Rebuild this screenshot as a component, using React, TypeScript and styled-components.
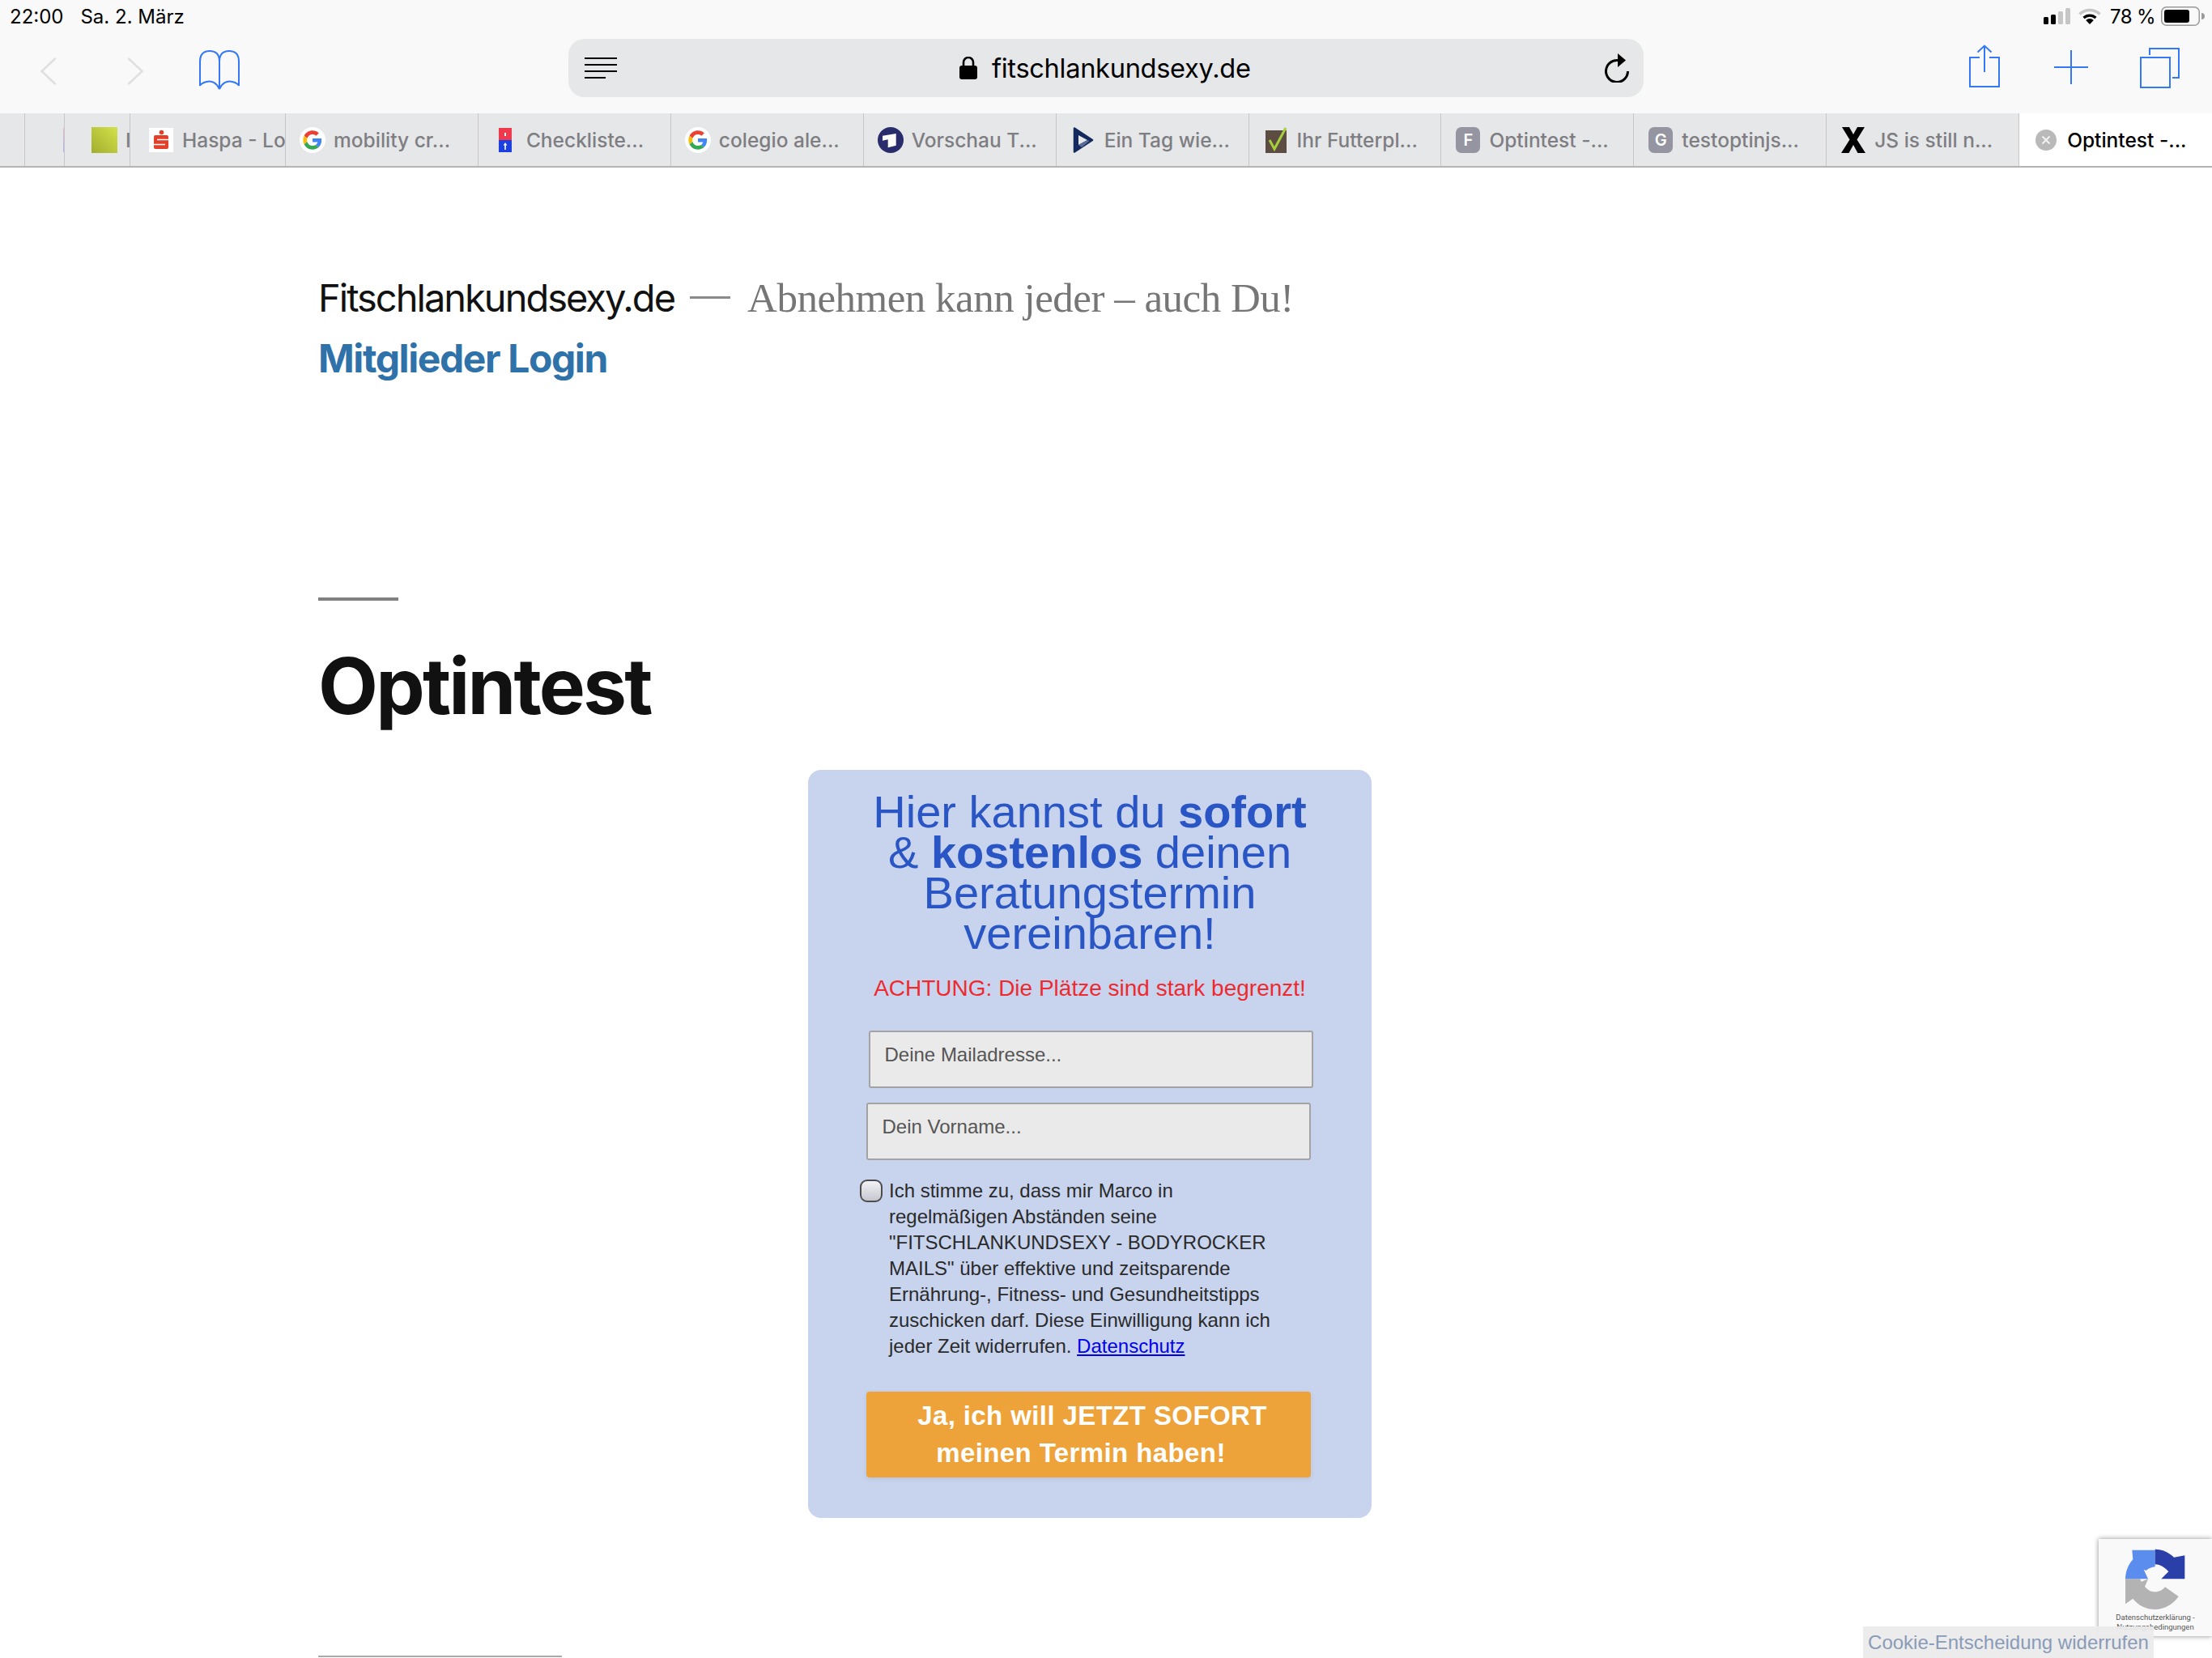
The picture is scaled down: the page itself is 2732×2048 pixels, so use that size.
import React from 'react';
import styled, { createGlobalStyle } from 'styled-components';

const GlobalStyle = createGlobalStyle`
  html, body {
    margin: 0;
    padding: 0;
    background: #fff;
  }
  * {
    box-sizing: border-box;
  }
`;

const BLUE = '#3478f6';
const CHROME = '"Inter", "Liberation Sans", sans-serif';
const HELVETICA = '"Liberation Sans", Arial, sans-serif';

const Page = styled.div`
  width: 2732px;
  height: 2048px;
  position: relative;
  overflow: hidden;
  background: #fff;
`;

const BrowserBar = styled.header`
  background: #f9f9f9;
`;

const StatusBar = styled.div`
  height: 40px;
  padding: 0 9px 0 12px;
  display: flex;
  align-items: center;
  justify-content: space-between;
  font-family: ${CHROME};
  font-size: 24px;
  color: #000;
`;

const StatusGroup = styled.div`
  display: flex;
  align-items: center;
`;

const BatteryLevel = styled.span`
  margin-left: 11px;
  letter-spacing: -0.6px;
`;

const Toolbar = styled.div`
  height: 100px;
  display: grid;
  grid-template-columns: 702px 1328px 1fr;
  align-items: start;
`;

const NavGroup = styled.div`
  display: flex;
  align-items: flex-start;
  padding-left: 50px;
`;

const ActionGroup = styled.div`
  display: flex;
  align-items: flex-start;
  padding-left: 402px;
`;

const IconSlot = styled.span<{ $left?: number; $top?: number }>`
  display: flex;
  margin-left: ${(p) => p.$left ?? 0}px;
  margin-top: ${(p) => p.$top ?? 0}px;
`;

const UrlBar = styled.div`
  height: 72px;
  margin-top: 8px;
  border-radius: 20px;
  background: #e6e7e9;
  display: grid;
  grid-template-columns: 463px auto 1fr auto;
  align-items: center;
  padding-left: 20px;
  padding-right: 18px;
`;

const UrlCenter = styled.div`
  display: flex;
  align-items: center;
  gap: 18px;
  font-family: ${CHROME};
  font-size: 32.6px;
  letter-spacing: -0.3px;
  color: #000;
`;

const TabStrip = styled.div`
  height: 67px;
  display: flex;
  background: #e6e7e9;
  border-bottom: 2px solid #b4b4b4;
`;

const Tab = styled.div<{ $width?: number; $active?: boolean; $pad?: number }>`
  ${(p) => (p.$width ? `flex: none; width: ${p.$width}px;` : 'flex: 1 1 0;')}
  min-width: 0;
  display: flex;
  align-items: center;
  justify-content: ${(p) => (p.$pad === 0 ? 'flex-end' : 'flex-start')};
  overflow: hidden;
  padding-left: ${(p) => p.$pad ?? 17}px;
  border-right: 1px solid ${(p) => (p.$active ? 'transparent' : '#c6c6c8')};
  background: ${(p) => (p.$active ? '#fff' : 'transparent')};
`;

const TabSliver = styled.span`
  width: 1px;
  height: 30px;
  background: linear-gradient(#f0b9c4, #a9b4ee);
`;

const FaviconBox = styled.span`
  width: 32px;
  height: 32px;
  flex: none;
  display: flex;
  align-items: center;
  justify-content: center;
`;

const TabTitle = styled.span<{ $active?: boolean }>`
  margin-left: 10px;
  font-family: ${CHROME};
  font-size: 24.5px;
  font-weight: 500;
  white-space: nowrap;
  color: ${(p) => (p.$active ? '#000' : '#7e7e82')};
`;

const LetterTile = styled.span`
  width: 30px;
  height: 32px;
  border-radius: 7px;
  background: #9595a1;
  color: #fff;
  font-family: ${CHROME};
  font-size: 20px;
  font-weight: 600;
  display: flex;
  align-items: center;
  justify-content: center;
`;

const Main = styled.main`
  padding: 123px 0 0 393px;
`;

const SiteLine = styled.div`
  height: 75px;
  display: flex;
  align-items: center;
  white-space: nowrap;
`;

const SiteTitle = styled.span`
  font-family: ${CHROME};
  font-size: 47px;
  letter-spacing: -2px;
  color: #111;
`;

const Dash = styled.span`
  width: 50px;
  height: 3px;
  background: #8a8a8a;
  margin: 0 21px 0 19px;
`;

const Tagline = styled.span`
  font-family: "Liberation Serif", "Times New Roman", serif;
  font-size: 51px;
  letter-spacing: -0.5px;
  color: #767676;
`;

const MemberLink = styled.a`
  font-family: ${CHROME};
  font-size: 48px;
  font-weight: 700;
  letter-spacing: -1.4px;
  color: #2f72a9;
  text-decoration: none;
`;

const Rule = styled.hr`
  width: 99px;
  height: 4px;
  border: 0;
  margin: 258px 0 0;
  background: #808080;
`;

const PageTitle = styled.h1`
  margin: 44px 0 0;
  height: 122px;
  display: flex;
  align-items: center;
  font-family: ${CHROME};
  font-size: 96px;
  font-weight: 700;
  letter-spacing: -2.8px;
  line-height: 1;
  color: #111;
`;

const OptinCard = styled.form`
  width: 696px;
  height: 924px;
  margin: 43px 0 0 605px;
  padding-top: 27px;
  border-radius: 16px;
  background: #c8d4ee;
  font-family: ${HELVETICA};
  display: flex;
  flex-direction: column;
`;

const CardHeading = styled.h2`
  width: 560px;
  margin: 0 auto;
  text-align: center;
  font-size: 56px;
  font-weight: 400;
  line-height: 50px;
  color: #2a55c4;
  strong {
    font-weight: 700;
  }
`;

const Warning = styled.p`
  margin: 23px 0 0;
  text-align: center;
  font-size: 28px;
  line-height: 40px;
  color: #ee2a2e;
`;

const TextField = styled.input<{ $left: number; $top: number }>`
  display: block;
  width: 549px;
  height: 71px;
  margin: ${(p) => p.$top}px 0 0 ${(p) => p.$left}px;
  padding: 0 17.5px 12px;
  background: #eaeaea;
  border: 2px solid #a3a3a3;
  border-radius: 3px;
  font-family: ${HELVETICA};
  font-size: 24px;
  &::placeholder {
    color: #555;
    opacity: 1;
  }
`;

const ConsentRow = styled.label`
  display: flex;
  align-items: flex-start;
  margin: 24px 0 0 64px;
  font-size: 24px;
  line-height: 32px;
  color: #2a2a2a;
`;

const ConsentBox = styled.input`
  appearance: none;
  flex: none;
  width: 28px;
  height: 28px;
  margin: 0 8px 0 0;
  border: 2px solid #4d4d4d;
  border-radius: 9px;
  background: linear-gradient(#f2f2f7, #c6c7cf);
`;

const ConsentText = styled.span`
  width: 540px;
  margin-top: -2px;
`;

const PrivacyLink = styled.a`
  color: #0000ee;
  text-decoration: underline;
`;

const SubmitButton = styled.button`
  width: 549px;
  height: 106px;
  margin: 40px 0 0 72px;
  padding: 0;
  border: 0;
  border-radius: 4px;
  background: #eea33a;
  box-shadow: 0 2px 6px rgba(0, 0, 0, 0.08);
  color: #fff;
  font-family: ${HELVETICA};
  font-size: 33px;
  font-weight: 700;
  line-height: 46px;
  letter-spacing: 0.4px;
`;

const ButtonLine = styled.span<{ $before?: number; $after?: number }>`
  display: block;
  padding-left: ${(p) => p.$before ?? 0}px;
  padding-right: ${(p) => p.$after ?? 0}px;
`;

const FooterRule = styled.hr`
  width: 301px;
  height: 2px;
  border: 0;
  margin: 170px 0 0;
  background: #aaa;
`;

const RecaptchaBadge = styled.aside`
  position: absolute;
  right: 0;
  top: 1901px;
  width: 140px;
  height: 120px;
  padding-top: 12px;
  background: #f9f9f9;
  box-shadow: 0 0 6px rgba(0, 0, 0, 0.45);
  display: flex;
  flex-direction: column;
  align-items: center;
  font-family: "Roboto", ${HELVETICA};
  font-size: 9.5px;
  line-height: 12px;
  color: #555;
`;

const BadgeLinks = styled.div`
  margin-top: 4px;
  text-align: center;
  white-space: nowrap;
`;

const CookieBar = styled.div`
  position: absolute;
  left: 2301px;
  bottom: 0;
  width: 359px;
  height: 39px;
  background: rgba(235, 235, 235, 0.93);
  display: flex;
  align-items: center;
  justify-content: center;
  font-family: ${HELVETICA};
  font-size: 24px;
  white-space: nowrap;
  color: #8a9bb8;
`;

const GoogleIcon = () => (
  <svg width="32" height="32" viewBox="-9 -9 66 66">
    <circle cx="24" cy="24" r="33" fill="#fff" />
    <path fill="#EA4335" d="M24 9.500c3.540 0 6.710 1.220 9.210 3.600l6.850-6.850C35.900 2.380 30.470 0 24 0 14.620 0 6.510 5.380 2.560 13.220l7.980 6.190C12.430 13.720 17.740 9.500 24 9.500z" />
    <path fill="#4285F4" d="M46.980 24.550c0-1.570-.15-3.090-.38-4.550H24v9.020h12.940c-.58 2.960-2.260 5.480-4.780 7.180l7.730 6c4.510-4.180 7.090-10.360 7.090-17.650z" />
    <path fill="#FBBC05" d="M10.530 28.590c-.48-1.450-.76-2.990-.76-4.590s.27-3.140.76-4.590l-7.980-6.190C.92 16.460 0 20.120 0 24c0 3.880.92 7.540 2.560 10.780l7.970-6.190z" />
    <path fill="#34A853" d="M24 48c6.480 0 11.930-2.130 15.890-5.810l-7.730-6c-2.150 1.450-4.920 2.300-8.160 2.300-6.260 0-11.570-4.220-13.470-9.910l-7.980 6.190C6.510 42.620 14.620 48 24 48z" />
  </svg>
);

const faviconDrawings: Record<string, React.ReactNode> = {
  lime: (
    <svg width="32" height="32" viewBox="0 0 32 32">
      <defs>
        <linearGradient id="limeFill" x1="1" y1="0" x2="0" y2="1">
          <stop offset="0" stopColor="#d2e24a" />
          <stop offset="1" stopColor="#a3ad2e" />
        </linearGradient>
      </defs>
      <rect width="32" height="32" fill="url(#limeFill)" />
    </svg>
  ),
  haspa: (
    <svg width="30" height="30" viewBox="0 0 30 30">
      <rect width="30" height="30" fill="#fff" />
      <circle cx="15.500" cy="5.500" r="2.800" fill="#e2402b" />
      <rect x="6" y="9" width="18" height="17" rx="2" fill="#e2402b" />
      <path d="M10 14.500h14M6 20.500h14" stroke="#fff" strokeWidth="1.600" />
    </svg>
  ),
  google: <GoogleIcon />,
  check: (
    <svg width="16" height="30" viewBox="0 0 16 30">
      <rect width="16" height="15" fill="#ee3a4c" />
      <rect y="15" width="16" height="15" fill="#1b3fe0" />
      <rect x="7" y="6" width="2" height="4" fill="#fff" />
      <path d="M8 18l-2.400 3.500h1.600V27h1.600v-5.500h1.600z" fill="#fff" />
    </svg>
  ),
  tagesschau: (
    <svg width="32" height="32" viewBox="0 0 32 32">
      <circle cx="16" cy="16" r="16" fill="#2a2d6b" />
      <path d="M6 10.700L22.700 8v14.700l-10 2.600v-10L6 16.700z" fill="#fff" />
    </svg>
  ),
  play: (
    <svg width="26" height="32" viewBox="0 0 26 32">
      <path d="M2 1.500l22 14.500L2 30.500z" fill="#142a5e" strokeLinejoin="round" stroke="#142a5e" strokeWidth="2.500" />
      <path d="M7 10l11 6-11 6z" fill="#e6e7e9" />
      <path d="M7 22l11-6 2.500 1L11 25z" fill="#5a6d96" />
    </svg>
  ),
  futter: (
    <svg width="28" height="32" viewBox="0 0 28 32">
      <rect x="1" y="4" width="26" height="28" fill="#5c4c42" />
      <path d="M6 16l6 11L26 1" fill="none" stroke="#a5cf3a" strokeWidth="3" />
    </svg>
  ),
  x: (
    <svg width="30" height="32" viewBox="0 0 30 32">
      <path d="M1 0h9l5 9 5-9h9L19.500 15.500 30 32h-9.500L15 22 9.500 32H0l10.500-16.500z" fill="#000" />
    </svg>
  ),
  close: (
    <svg width="26" height="26" viewBox="0 0 26 26">
      <circle cx="13" cy="13" r="13" fill="#b9b9b9" />
      <path d="M8.500 8.500l9 9M17.500 8.500l-9 9" stroke="#f2f2f2" strokeWidth="2" />
    </svg>
  ),
};

const tabs = [
  { title: 'mobility cr...', icon: 'google' },
  { title: 'Checkliste...', icon: 'check' },
  { title: 'colegio ale...', icon: 'google' },
  { title: 'Vorschau T...', icon: 'tagesschau' },
  { title: 'Ein Tag wie...', icon: 'play' },
  { title: 'Ihr Futterpl...', icon: 'futter' },
  { title: 'Optintest -...', letter: 'F' },
  { title: 'testoptinjs...', letter: 'G' },
  { title: 'JS is still n...', icon: 'x' },
];

const SignalIcon = () => (
  <svg width="33" height="20" viewBox="0 0 33 20">
    <rect x="0" y="11" width="6" height="9" rx="1.500" fill="#000" />
    <rect x="9" y="8" width="6" height="12" rx="1.500" fill="#000" />
    <rect x="18" y="4" width="6" height="16" rx="1.500" fill="#c6c6c6" />
    <rect x="27" y="0" width="6" height="20" rx="1.500" fill="#c6c6c6" />
  </svg>
);

const WifiIcon = () => (
  <svg width="28" height="20" viewBox="0 0 28 20">
    <path d="M1.500 7.500a18 18 0 0 1 25 0" fill="none" stroke="#c6c6c6" strokeWidth="3.500" />
    <path d="M6.500 12a11 11 0 0 1 15 0" fill="none" stroke="#000" strokeWidth="3.200" />
    <path d="M14 20l-4.800-5a7 7 0 0 1 9.600 0z" fill="#000" />
  </svg>
);

const BatteryIcon = () => (
  <svg width="54" height="24" viewBox="0 0 54 24">
    <rect x="0.750" y="0.750" width="46.500" height="22.500" rx="6" fill="none" stroke="#9a9a9a" strokeWidth="1.500" />
    <rect x="4" y="4" width="31" height="16" rx="3" fill="#000" />
    <path d="M50 8a4 4 0 0 1 4 4 4 4 0 0 1-4 4z" fill="#9a9a9a" />
  </svg>
);

const ChevronIcon = ({ flip }: { flip?: boolean }) => (
  <svg width="20" height="34" viewBox="0 0 20 34">
    <path d={flip ? 'M1.500 1L18.500 17L1.500 33' : 'M18.500 1L1.500 17L18.500 33'} fill="none" stroke="#dfdfdf" strokeWidth="2.500" />
  </svg>
);

const BookIcon = () => (
  <svg width="50" height="49" viewBox="0 0 50 49">
    <path
      d="M25 48c-3-7-9-11-16-9-3 .8-7 2-8 5V14C1 6 5 1 13 1s12 5 12 13v34zm0 0c3-7 9-11 16-9 3 .8 7 2 8 5V14c0-8-4-13-12-13S25 6 25 14"
      fill="none"
      stroke={BLUE}
      strokeWidth="2"
    />
  </svg>
);

const ReaderIcon = () => (
  <svg width="40" height="26" viewBox="0 0 40 26">
    <path d="M0 1h40M0 9h40M0 17h40M0 25h26" stroke="#000" strokeWidth="2" />
  </svg>
);

const LockIcon = () => (
  <svg width="22" height="28" viewBox="0 0 22 28">
    <rect x="0" y="11" width="22" height="17" rx="3" fill="#000" />
    <path d="M5 12V7a6 6 0 0 1 12 0v5" fill="none" stroke="#000" strokeWidth="2.600" />
  </svg>
);

const ReloadIcon = () => (
  <svg width="31" height="36" viewBox="0 0 31 36">
    <path d="M17 8.500A13.500 13.500 0 1 0 29.500 22" fill="none" stroke="#000" strokeWidth="3" />
    <path d="M17 0l10 8.500L17 17z" fill="#000" />
  </svg>
);

const ShareIcon = () => (
  <svg width="38" height="54" viewBox="0 0 38 54">
    <path d="M13 16H1v36h36V16H25" fill="none" stroke={BLUE} strokeWidth="2" />
    <path d="M19 34V1.500M10.500 9.500L19 1.500l8.500 8" fill="none" stroke={BLUE} strokeWidth="2" />
  </svg>
);

const PlusIcon = () => (
  <svg width="42" height="42" viewBox="0 0 42 42">
    <path d="M21 0v42M0 21h42" stroke={BLUE} strokeWidth="2" />
  </svg>
);

const TabsIcon = () => (
  <svg width="49" height="50" viewBox="0 0 49 50">
    <rect x="1" y="12" width="36" height="37" fill="none" stroke={BLUE} strokeWidth="2" />
    <path d="M12 9V1h36v36h-8" fill="none" stroke={BLUE} strokeWidth="2" />
  </svg>
);

const RecaptchaLogo = () => (
  <svg width="74" height="75" viewBox="0 0 222 225">
    <path fill="#b3b3b3" d="M0 112h55c1 4 3 9 5 12l-2-1 28-12h-1L72 140c10 13 23 20 38 20 15 0 28-7 37-18l50 35c-20 29-52 48-87 48-33 0-62-15-82-40L0 205z" />
    <path fill="#5b8dee" d="M0 112C1 84 10 60 28 40L25 5h85v62c-12 1-24 6-33 14l-9-4 16 35H0z" />
    <path fill="#2a3fa8" d="M110 2c28 0 52 12 70 30l40-7v87h-87l27-27c-9-12-30-27-50-27z" />
  </svg>
);

const App: React.FC = () => {
  return (
    <Page>
      <GlobalStyle />
      <BrowserBar>
        <StatusBar>
          <StatusGroup>
            <span>22:00</span>
            <IconSlot $left={21}>Sa. 2. März</IconSlot>
          </StatusGroup>
          <StatusGroup>
            <SignalIcon />
            <IconSlot $left={10}>
              <WifiIcon />
            </IconSlot>
            <BatteryLevel>78 %</BatteryLevel>
            <IconSlot $left={7}>
              <BatteryIcon />
            </IconSlot>
          </StatusGroup>
        </StatusBar>
        <Toolbar>
          <NavGroup>
            <IconSlot $top={31}>
              <ChevronIcon />
            </IconSlot>
            <IconSlot $left={87} $top={31}>
              <ChevronIcon flip />
            </IconSlot>
            <IconSlot $left={69} $top={22}>
              <BookIcon />
            </IconSlot>
          </NavGroup>
          <UrlBar>
            <ReaderIcon />
            <UrlCenter>
              <LockIcon />
              fitschlankundsexy.de
            </UrlCenter>
            <span />
            <ReloadIcon />
          </UrlBar>
          <ActionGroup>
            <IconSlot $top={15}>
              <ShareIcon />
            </IconSlot>
            <IconSlot $left={67} $top={22}>
              <PlusIcon />
            </IconSlot>
            <IconSlot $left={64} $top={19}>
              <TabsIcon />
            </IconSlot>
          </ActionGroup>
        </Toolbar>
        <TabStrip>
          <Tab $width={31} />
          <Tab $width={49} $pad={0}>
            <TabSliver />
          </Tab>
          <Tab $width={81} $pad={33}>
            <FaviconBox>{faviconDrawings.lime}</FaviconBox>
            <TabTitle>I</TabTitle>
          </Tab>
          <Tab $width={192} $pad={22}>
            <FaviconBox>{faviconDrawings.haspa}</FaviconBox>
            <TabTitle>Haspa - Lo</TabTitle>
          </Tab>
          {tabs.map((tab, index) => (
            <Tab key={index}>
              <FaviconBox>
                {tab.letter ? <LetterTile>{tab.letter}</LetterTile> : faviconDrawings[tab.icon as string]}
              </FaviconBox>
              <TabTitle>{tab.title}</TabTitle>
            </Tab>
          ))}
          <Tab $active>
            <FaviconBox>{faviconDrawings.close}</FaviconBox>
            <TabTitle $active>Optintest -...</TabTitle>
          </Tab>
        </TabStrip>
      </BrowserBar>
      <Main>
        <SiteLine>
          <SiteTitle>Fitschlankundsexy.de</SiteTitle>
          <Dash />
          <Tagline>Abnehmen kann jeder – auch Du!</Tagline>
        </SiteLine>
        <SiteLine>
          <MemberLink href="#">Mitglieder Login</MemberLink>
        </SiteLine>
        <Rule />
        <PageTitle>Optintest</PageTitle>
        <OptinCard>
          <CardHeading>
            Hier kannst du <strong>sofort</strong> &amp; <strong>kostenlos</strong> deinen Beratungstermin vereinbaren!
          </CardHeading>
          <Warning>ACHTUNG: Die Plätze sind stark begrenzt!</Warning>
          <TextField $left={75} $top={32} placeholder="Deine Mailadresse..." />
          <TextField $left={72} $top={18} placeholder="Dein Vorname..." />
          <ConsentRow>
            <ConsentBox type="checkbox" />
            <ConsentText>
              Ich stimme zu, dass mir Marco in
              <br />
              regelmäßigen Abständen seine
              <br />
              "FITSCHLANKUNDSEXY - BODYROCKER
              <br />
              MAILS" über effektive und zeitsparende
              <br />
              Ernährung-, Fitness- und Gesundheitstipps
              <br />
              zuschicken darf. Diese Einwilligung kann ich
              <br />
              jeder Zeit widerrufen. <PrivacyLink href="#">Datenschutz</PrivacyLink>
            </ConsentText>
          </ConsentRow>
          <SubmitButton type="button">
            <ButtonLine $before={9}>Ja, ich will JETZT SOFORT</ButtonLine>
            <ButtonLine $after={19}>meinen Termin haben!</ButtonLine>
          </SubmitButton>
        </OptinCard>
        <FooterRule />
      </Main>
      <RecaptchaBadge>
        <RecaptchaLogo />
        <BadgeLinks>
          Datenschutzerklärung -
          <br />
          Nutzungsbedingungen
        </BadgeLinks>
      </RecaptchaBadge>
      <CookieBar>Cookie-Entscheidung widerrufen</CookieBar>
    </Page>
  );
};

export default App;
